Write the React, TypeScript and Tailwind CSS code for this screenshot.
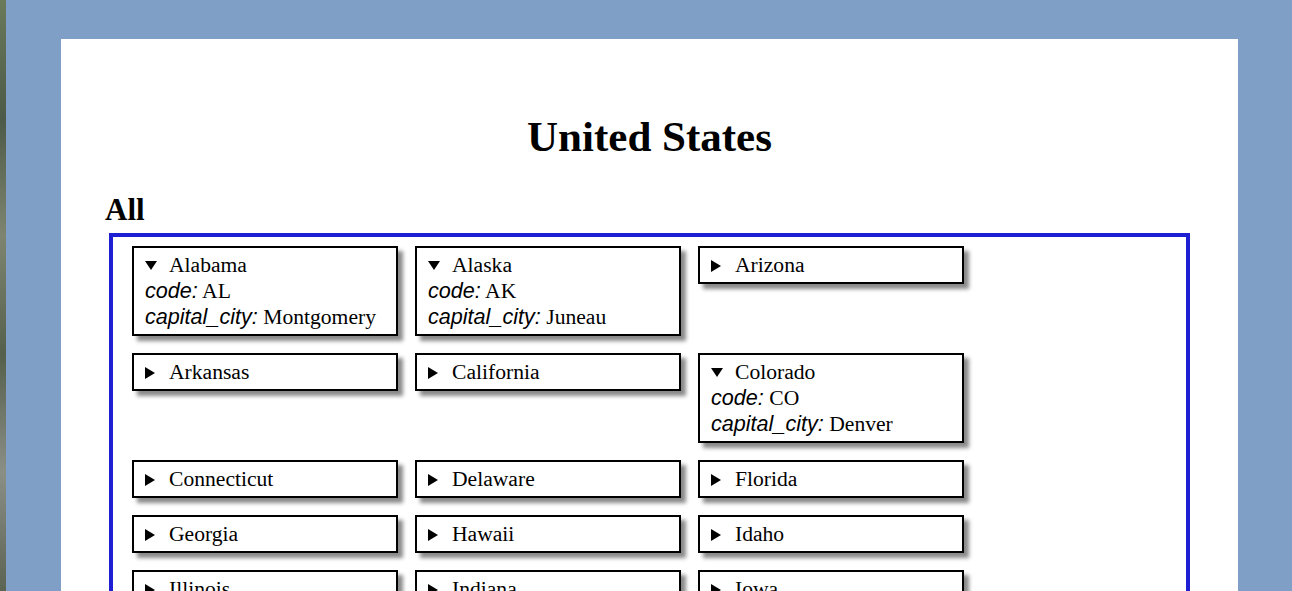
import React from "react";

interface StateItem {
  name: string;
  code?: string;
  capital?: string;
}

const states: StateItem[] = [
  { name: "Alabama", code: "AL", capital: "Montgomery" },
  { name: "Alaska", code: "AK", capital: "Juneau" },
  { name: "Arizona" },
  { name: "Arkansas" },
  { name: "California" },
  { name: "Colorado", code: "CO", capital: "Denver" },
  { name: "Connecticut" },
  { name: "Delaware" },
  { name: "Florida" },
  { name: "Georgia" },
  { name: "Hawaii" },
  { name: "Idaho" },
  { name: "Illinois" },
  { name: "Indiana" },
  { name: "Iowa" },
  { name: "Kansas" },
  { name: "Kentucky" },
  { name: "Louisiana" },
];

function Triangle({ open }: { open: boolean }) {
  return (
    <span className="inline-flex w-[24px] shrink-0 items-center">
      {open ? (
        <svg width="12" height="9" viewBox="0 0 12 9" className="mt-[1px]">
          <polygon points="0,0 12,0 6,9" fill="#000" />
        </svg>
      ) : (
        <svg width="10" height="12" viewBox="0 0 10 12" className="mt-[1px]">
          <polygon points="0,0 10,6 0,12" fill="#000" />
        </svg>
      )}
    </span>
  );
}

function StateCard({ s }: { s: StateItem }) {
  const open = !!s.code;
  return (
    <div className="w-[266px] border-2 border-black bg-white pl-[11px] pr-2 pt-[4px] pb-[4px] shadow-[5px_5px_4px_#8a8a8a] font-['Liberation_Serif',serif] text-[21.6px] leading-[26px] text-black">
      <div className="flex items-center">
        <Triangle open={open} />
        <span>{s.name}</span>
      </div>
      {open && (
        <>
          <div>
            <i className="font-['Liberation_Sans',sans-serif]">code:</i> {s.code}
          </div>
          <div>
            <i className="font-['Liberation_Sans',sans-serif]">capital_city:</i> {s.capital}
          </div>
        </>
      )}
    </div>
  );
}

export default function App() {
  return (
    <div className="flex h-screen overflow-hidden bg-[#7f9fc6]">
      {/* desktop peeking out at the left edge */}
      <div className="w-[6px] shrink-0 bg-[linear-gradient(180deg,#6a7a5a_0%,#4d5a48_20%,#7d8570_40%,#55604c_60%,#8a8f86_80%,#5b6352_100%)]" />
      <div className="ml-[55px] mr-[54px] mt-[39px] flex-1 bg-white px-[48px] pt-[73px]">
        <h1 className="text-center font-['Liberation_Serif',serif] text-[43px] font-bold leading-[50px] text-black">
          United States
        </h1>
        <h2 className="-ml-[4px] mt-[30px] font-['Liberation_Serif',serif] text-[31px] font-bold leading-[36px] text-black">
          All
        </h2>
        <div className="mt-[5px] flex flex-wrap items-start gap-x-[17px] gap-y-[17px] border-4 border-[#1e1ed2] pl-[19px] pt-[9px] pb-[18px]">
          {states.map((s) => (
            <StateCard key={s.name} s={s} />
          ))}
        </div>
      </div>
    </div>
  );
}
